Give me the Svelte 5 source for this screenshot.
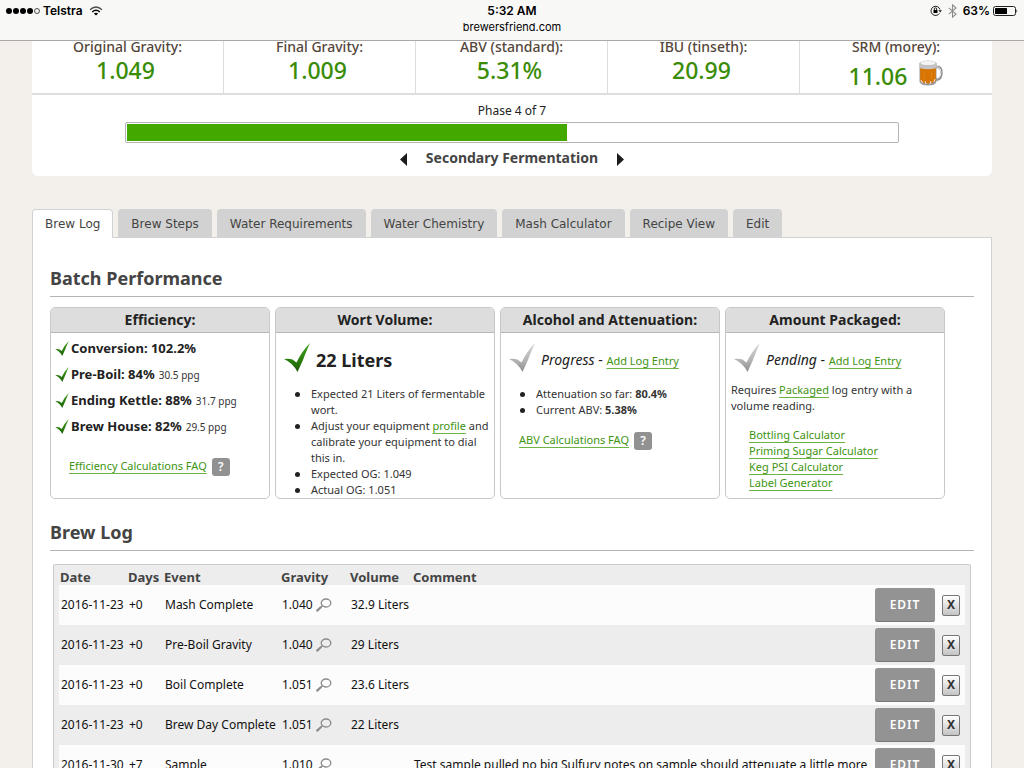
<script>
  const stats = [
    { label: 'Original Gravity:', value: '1.049' },
    { label: 'Final Gravity:', value: '1.009' },
    { label: 'ABV (standard):', value: '5.31%' },
    { label: 'IBU (tinseth):', value: '20.99' },
    { label: 'SRM (morey):', value: '11.06', beer: true },
  ];
  const phase = 4;
  const phases = 7;
  const tabs = ['Brew Log', 'Brew Steps', 'Water Requirements', 'Water Chemistry', 'Mash Calculator', 'Recipe View', 'Edit'];
  let active = $state('Brew Log');
  const efficiency = [
    { name: 'Conversion: 102.2%', ppg: '' },
    { name: 'Pre-Boil: 84%', ppg: '30.5 ppg' },
    { name: 'Ending Kettle: 88%', ppg: '31.7 ppg' },
    { name: 'Brew House: 82%', ppg: '29.5 ppg' },
  ];
  const tools = ['Bottling Calculator', 'Priming Sugar Calculator', 'Keg PSI Calculator', 'Label Generator'];
  const log = [
    { date: '2016-11-23', days: '+0', event: 'Mash Complete', gravity: '1.040', volume: '32.9 Liters', comment: '' },
    { date: '2016-11-23', days: '+0', event: 'Pre-Boil Gravity', gravity: '1.040', volume: '29 Liters', comment: '' },
    { date: '2016-11-23', days: '+0', event: 'Boil Complete', gravity: '1.051', volume: '23.6 Liters', comment: '' },
    { date: '2016-11-23', days: '+0', event: 'Brew Day Complete', gravity: '1.051', volume: '22 Liters', comment: '' },
    { date: '2016-11-30', days: '+7', event: 'Sample', gravity: '1.010', volume: '', comment: 'Test sample pulled no big Sulfury notes on sample should attenuate a little more' },
  ];
</script>

{#snippet check(kind)}
  <svg class="check {kind}" viewBox="0 0 26 29" aria-hidden="true">
    <defs>
      <linearGradient id="g-{kind}" x1="0" y1="0" x2="0" y2="1">
        <stop offset="0" stop-color={kind === 'pending' ? '#d8d8d8' : '#3fa01a'} />
        <stop offset="0.6" stop-color={kind === 'pending' ? '#b4b4b4' : '#2a7d0e'} />
        <stop offset="1" stop-color={kind === 'pending' ? '#8c8c8c' : '#1a5c06'} />
      </linearGradient>
    </defs>
    <path fill="url(#g-{kind})" d="M0 16 Q5 15.200 8.500 16.500 L12.500 19.500 Q18 8 26 0 Q21.500 10 19 17 Q16 23.500 13.500 29 Q9 20 0 16Z" />
  </svg>
{/snippet}

<div class="screen">
  <header class="chrome">
    <div class="carrier">
      <svg width="34" height="8" viewBox="0 0 34 8" aria-hidden="true">
        <circle cx="3" cy="4" r="3" /><circle cx="10" cy="4" r="3" /><circle cx="17" cy="4" r="3" /><circle cx="24" cy="4" r="3" />
        <circle cx="31" cy="4" r="2.500" fill="none" stroke="#222" stroke-width="0.800" />
      </svg>
      <span>Telstra</span>
      <svg class="wifi" width="14" height="10" viewBox="0 0 14 10" fill="none" stroke="#000" stroke-width="1.500" aria-hidden="true">
        <path d="M1 3.800 Q7 -1.800 13 3.800" stroke-width="1.200" opacity="0.700" /><path d="M3.200 6 Q7 2.600 10.800 6" /><path d="M7 9.600 L4.900 7.400 Q7 5.900 9.100 7.400Z" fill="#000" stroke="none" />
      </svg>
    </div>
    <div class="center"><b>5:32 AM</b><span>brewersfriend.com</span></div>
    <div class="power">
      <svg width="12" height="12" viewBox="0 0 12 12" fill="none" stroke="#222" aria-hidden="true">
        <path d="M9.500 8.300 A4.600 4.600 0 1 1 10 4.500" /><path d="M8.300 5.200 H12 L10.200 7.500Z" fill="#222" stroke="none" />
        <rect x="3.500" y="5" width="4" height="3" fill="#000" stroke="none" /><path d="M4.300 5 V4 A1.200 1.200 0 0 1 6.700 4 V5" />
      </svg>
      <svg class="bt" width="9" height="14" viewBox="0 0 9 14" fill="none" stroke="#8d8d8d" stroke-width="1.100" aria-hidden="true">
        <path d="M0.800 3.800 L8 10 L4.500 13.200 V0.800 L8 4 L0.800 10.200" />
      </svg>
      <b>63%</b>
      <svg width="25" height="10" viewBox="0 0 25 10" aria-hidden="true">
        <rect x="0.500" y="0.500" width="22" height="9" rx="2" fill="none" stroke="#222" /><rect x="2" y="2" width="12" height="6" rx="0.500" /><path d="M23.500 3 Q25 5 23.500 7Z" />
      </svg>
    </div>
  </header>

  <main>
    <section class="summary">
      <div class="stats">
        {#each stats as s}
          <div class="stat">
            <div class="label">{s.label}</div>
            <div class="value" class:mug={s.beer}>
              {s.value}
              {#if s.beer}
                <svg width="24" height="26" viewBox="0 0 24 26" aria-hidden="true">
                  <path d="M16 7 H19.500 Q22.500 8 22.500 12.500 Q22.500 18 19 19.500 H16" fill="none" stroke="#8a8a8a" stroke-width="2.400" />
                  <path d="M16 7 H19.500 Q22 8.500 22 12.500 Q22 17.500 18.500 19" fill="none" stroke="#e6e6e6" stroke-width="1" />
                  <path d="M0.500 3 H17.500 V22 Q16 25.500 9 25.500 Q2 25.500 0.500 22Z" fill="#9a9a9a" />
                  <path d="M1.200 8 H16.800 V21 Q13 23.500 9 23.500 Q4 23.500 1.200 21Z" fill="#d87500" />
                  <path d="M5 11 V19 M12.500 11 V19" stroke="#e08a20" stroke-width="0.800" />
                  <path d="M2 20 L3.500 23 M6 21 L7 24 M11 24 L12 21 M15 22 L16 19" stroke="#e8e8e8" stroke-width="1" />
                  <path d="M0.500 3 Q1 1 9 0.500 Q17 1 17.500 3 V8 Q9 10.500 0.500 8Z" fill="#c4c4c4" />
                  <ellipse cx="9" cy="3" rx="7.500" ry="2" fill="#f4f4f4" />
                </svg>
              {/if}
            </div>
          </div>
        {/each}
      </div>
      <div class="phase">Phase {phase} of {phases}</div>
      <div class="progress" role="progressbar" aria-label="Phase" aria-valuenow={phase} aria-valuemin="0" aria-valuemax={phases}>
        <div class="fill" style="width: {(phase / phases) * 100}%"></div>
      </div>
      <div class="stage">
        <button aria-label="Previous phase"><svg width="7" height="13" viewBox="0 0 7 13"><path d="M7 0 V13 L0 6.500Z" fill="#1c1c1c" /></svg></button>
        <strong>Secondary Fermentation</strong>
        <button aria-label="Next phase"><svg width="7" height="13" viewBox="0 0 7 13"><path d="M0 0 V13 L7 6.500Z" fill="#1c1c1c" /></svg></button>
      </div>
    </section>

    <nav class="tabs">
      {#each tabs as t}
        <button class:active={active === t} onclick={() => (active = t)}>{t}</button>
      {/each}
    </nav>

    <section class="panel">
      <h2>Batch Performance</h2>
      <div class="cards">
        <article>
          <h3>Efficiency:</h3>
          <ul class="eff">
            {#each efficiency as e}
              <li>{@render check('small')}<b>{e.name}</b><span>{e.ppg}</span></li>
            {/each}
          </ul>
          <div class="faq"><a href="#efficiency">Efficiency Calculations FAQ</a><button aria-label="Efficiency help">?</button></div>
        </article>
        <article>
          <h3>Wort Volume:</h3>
          <div class="status">{@render check('done')}<strong>22 Liters</strong></div>
          <ul class="notes">
            <li>Expected 21 Liters of fermentable wort.</li>
            <li>Adjust your equipment <a href="#profile">profile</a> and calibrate your equipment to dial this in.</li>
            <li>Expected OG: 1.049</li>
            <li>Actual OG: 1.051</li>
          </ul>
        </article>
        <article>
          <h3>Alcohol and Attenuation:</h3>
          <div class="status">{@render check('pending')}<span><em>Progress</em> - <a href="#add">Add Log Entry</a></span></div>
          <ul class="notes">
            <li>Attenuation so far: <b>80.4%</b></li>
            <li>Current ABV: <b>5.38%</b></li>
          </ul>
          <div class="faq abv"><a href="#abv">ABV Calculations FAQ</a><button aria-label="ABV help">?</button></div>
        </article>
        <article>
          <h3>Amount Packaged:</h3>
          <div class="status">{@render check('pending')}<span><em>Pending</em> - <a href="#add">Add Log Entry</a></span></div>
          <p>Requires <a href="#packaged">Packaged</a> log entry with a volume reading.</p>
          <ul class="tools">
            {#each tools as t}<li><a href="#tool">{t}</a></li>{/each}
          </ul>
        </article>
      </div>

      <h2 class="second">Brew Log</h2>
      <div class="log">
        <table>
          <colgroup>
            <col class="c-date" /><col class="c-days" /><col class="c-event" /><col class="c-gravity" /><col class="c-volume" /><col /><col class="c-edit" /><col class="c-del" />
          </colgroup>
          <thead>
            <tr><th>Date</th><th>Days</th><th>Event</th><th>Gravity</th><th>Volume</th><th>Comment</th><td></td><td></td></tr>
          </thead>
          <tbody>
            {#each log as r}
              <tr>
                <td>{r.date}</td><td>{r.days}</td><td>{r.event}</td>
                <td>
                  <span class="grav">{r.gravity}
                    <svg width="16" height="14" viewBox="0 0 16 14" fill="none" stroke="#8a8a8a" aria-hidden="true">
                      <ellipse cx="10" cy="5" rx="4.800" ry="4" stroke-width="1.300" /><path d="M6.300 8 L4.500 9.500" stroke-width="1.200" /><path d="M4.800 9.300 L1.200 12.600" stroke-width="2.200" stroke-linecap="round" />
                    </svg>
                  </span>
                </td>
                <td>{r.volume}</td><td>{r.comment}</td>
                <td class="act"><button class="edit">EDIT</button></td>
                <td class="act"><button class="del" aria-label="Delete entry">X</button></td>
              </tr>
            {/each}
          </tbody>
        </table>
      </div>
    </section>
  </main>
</div>

<style>
  :global(body) { margin: 0; background: #f3f0eb; }
  * { box-sizing: border-box; }
  .screen { height: 100vh; display: flex; flex-direction: column; overflow: hidden; font-family: 'Noto Sans', sans-serif; font-size: 12px; color: #222; }
  button { font-family: inherit; padding: 0; border: 0; background: none; cursor: pointer; }
  ul { list-style: none; margin: 0; padding: 0; }
  svg { display: block; flex: none; }

  .chrome { flex: none; height: 41px; padding: 3px 6px 0; display: grid; grid-template-columns: 1fr auto 1fr; background: #f8f8f7; border-bottom: 1px solid #aaa8a6; font: 12px/16px Inter, sans-serif; color: #000; }
  .carrier, .power { display: flex; align-items: center; height: 15px; font-weight: 600; }
  .carrier { gap: 3px; }
  .wifi { margin-left: 3px; }
  .power { justify-content: flex-end; gap: 3px; }
  .power b { font-weight: 600; }
  .bt { margin: 0 3px; }
  .center { display: flex; flex-direction: column; align-items: center; font-size: 11px; }
  .center b { font-weight: 600; font-size: 12px; }

  main { flex: 1; min-height: 0; overflow: auto; scrollbar-width: none; padding: 0 32px; }
  .summary { background: #fff; border-radius: 0 0 6px 6px; height: 135px; }
  .stats { display: grid; grid-template-columns: repeat(5, 1fr); border-bottom: 2px solid #dedede; height: 54px; }
  .stat { text-align: center; border-right: 1px solid #dedede; }
  .stat:last-child { border-right: 0; }
  .label { font-size: 14px; line-height: 12px; font-weight: 500; color: #54463a; }
  .value { font-size: 23px; line-height: 30px; font-weight: 500; color: #3a8c06; padding: 2px 4px 0 0; }
  .mug { display: flex; justify-content: center; gap: 12px; padding: 8px 0 0; }
  .mug svg { margin-top: -1px; }
  .phase { text-align: center; line-height: 16px; padding-top: 8px; }
  .progress { width: 774px; max-width: 90%; height: 21px; margin: 3px auto 0; padding: 1px; border: 1px solid #b4b4b4; border-radius: 2px; }
  .fill { height: 100%; background: #43a800; }
  .stage { display: flex; justify-content: center; align-items: center; gap: 19px; height: 32px; }
  .stage strong { font-size: 14px; line-height: 20px; padding-bottom: 2px; color: #444; }

  .tabs { display: flex; gap: 5px; margin-top: 33px; }
  .tabs button { height: 28px; padding: 1px 12px 0; font: 12px/26px 'DejaVu Sans', sans-serif; color: #444; background: #d2d2d2; border: 1px solid #d2d2d2; border-bottom: 0; border-radius: 4px 4px 0 0; }
  .tabs .active { background: #fff; height: 29px; padding-bottom: 1px; margin-bottom: -1px; position: relative; }
  .panel { background: #fff; border: 1px solid #d2d2d2; padding: 29px 17px 20px; }
  h2 { margin: 0; font-size: 18px; line-height: 22px; padding-bottom: 7px; border-bottom: 1px solid #b4b4b4; color: #444; }
  .second { margin-top: 22px; }

  .cards { display: grid; grid-template-columns: repeat(4, 1fr); gap: 5px; max-width: 895px; margin-top: 10px; }
  article { height: 192px; overflow: hidden; border: 1px solid #c8c8c8; border-radius: 5px; font-size: 11px; line-height: 16px; color: #333; }
  h3 { margin: 0; font-size: 14px; line-height: 24px; height: 25px; background: #ddd; border-bottom: 1px solid #b8b8b8; text-align: center; color: #222; }
  a { color: #3e9410; text-decoration: underline 1px #6cb344; text-underline-offset: 3px; text-decoration-skip-ink: none; }
  .eff { padding: 2px 4px 0; }
  .eff li { display: flex; align-items: center; height: 26px; }
  .eff b { font-size: 13px; color: #222; margin: 0 4px 0 2px; }
  .eff span { font-size: 10px; padding-top: 2px; }
  .check { width: 26px; height: 29px; }
  .small { width: 14px; height: 15px; }
  .faq { display: flex; align-items: center; gap: 5px; height: 18px; margin: 19px 0 0 18px; }
  .faq a { padding-bottom: 2px; }
  .abv { margin-top: 14px; }
  .faq button { width: 18px; height: 18px; border-radius: 3px; background: #919191; color: #fff; font-size: 12px; line-height: 18px; font-weight: 600; }
  .status { display: flex; align-items: center; gap: 6px; padding: 6px 8px 0; height: 43px; font-size: 14px; color: #222; }
  .status strong, .status span { padding-top: 5px; }
  .status strong { font-size: 18px; line-height: 24px; }
  .status a { font-size: 11px; }
  .notes { padding: 10px 0 0 35px; }
  .notes li { position: relative; }
  .notes li::before { content: ''; position: absolute; left: -16px; top: 6px; width: 5px; height: 5px; border-radius: 50%; background: #222; }
  p { margin: 6px 5px 0; }
  .tools { padding: 13px 0 0 23px; }
  .tools li { height: 16px; }

  .log { margin: 13px 3px 0; padding: 5px; background: #ededed; border: 1px solid #cbcbcb; border-radius: 2px; }
  table { width: 100%; table-layout: fixed; border-collapse: collapse; color: #111; }
  th { text-align: left; padding: 0 1px; font-size: 13px; line-height: 15px; color: #444; white-space: nowrap; }
  thead td { padding: 0; }
  tbody td { height: 40px; padding: 0 2px 2px; white-space: nowrap; }
  tbody .act { padding-bottom: 0; }
  tbody tr:nth-child(odd) { background: #fcfcfc; }
  .c-date { width: 68px; } .c-days { width: 36px; } .c-event { width: 117px; } .c-gravity { width: 69px; } .c-volume { width: 63px; } .c-edit { width: 67px; } .c-del { width: 25px; }
  .grav { display: flex; align-items: center; gap: 3px; }
  .grav svg { margin-top: 1px; }
  .edit { display: block; width: 60px; height: 34px; border-radius: 3px; background: #939393; box-shadow: inset 0 -1px #777; color: #fff; font-size: 12px; line-height: 32px; font-weight: 600; letter-spacing: 1px; }
  .del { display: block; width: 18px; height: 21px; border: 1px solid #777; border-radius: 2px; background: linear-gradient(#fff, #c4c4c4); color: #333; font-size: 12px; font-weight: 700; line-height: 18px; }
</style>
